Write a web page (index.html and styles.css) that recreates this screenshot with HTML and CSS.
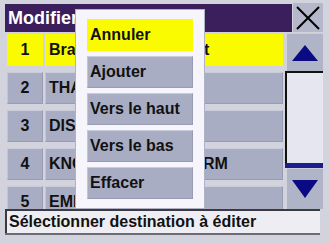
FILE: index.html
```html
<!DOCTYPE html>
<html lang="fr">
<head>
<meta charset="utf-8">
<title>Modifier</title>
<link rel="stylesheet" href="styles.css">
</head>
<body>
<div class="app">
  <div class="topbar">
    <div class="title">Modifier</div>
    <div class="close">
      <svg width="30" height="29" viewBox="0 0 30 29"><path d="M4 4 L26 26 M26 4 L4 26" stroke="#000" stroke-width="2" fill="none"/></svg>
    </div>
  </div>
  <div class="main">
    <div class="list">
      <div class="row sel"><div class="num">1</div><div class="name">Branson Airport East</div></div>
      <div class="row"><div class="num">2</div><div class="name">THAI PALACE</div></div>
      <div class="row"><div class="num">3</div><div class="name">DISNEYLAND</div></div>
      <div class="row"><div class="num">4</div><div class="name">KNOTT'S BERRY FARM</div></div>
      <div class="row"><div class="num">5</div><div class="name">EMILIO'S</div></div>
    </div>
    <div class="scroll">
      <div class="sbtn up">
        <svg width="26" height="16" viewBox="0 0 26 16"><path d="M13 0 L26 16 L0 16 Z" fill="#0a0a82"/></svg>
      </div>
      <div class="track"></div>
      <div class="thumbline"></div>
      <div class="sbtn down">
        <svg width="26" height="18" viewBox="0 0 26 18"><path d="M0 0 L26 0 L13 18 Z" fill="#0a0a82"/></svg>
      </div>
    </div>
  </div>
  <div class="status">Sélectionner destination à éditer</div>
  <div class="menu">
    <div class="item sel">Annuler</div>
    <div class="item">Ajouter</div>
    <div class="item">Vers le haut</div>
    <div class="item">Vers le bas</div>
    <div class="item">Effacer</div>
  </div>
</div>
</body>
</html>
```

FILE: styles.css
```css
html, body {
  margin: 0;
  padding: 0;
}
body {
  width: 329px;
  height: 243px;
  overflow: hidden;
  background: #d2d3dd;
  font-family: "Liberation Sans", Arial, sans-serif;
  font-weight: bold;
  color: #111;
}
.app {
  position: relative;
  padding: 3px 6px 0 5px;
  width: 318px;
}
.topbar {
  display: flex;
  height: 29px;
}
.title {
  flex: 1;
  margin-top: 1px;
  background: #3b1f5c;
  color: #fff;
  font-size: 18px;
  line-height: 28px;
  padding-left: 3px;
}
.close {
  width: 30px;
  margin-left: 1px;
  background: #b4b8ca;
  display: flex;
  align-items: center;
  justify-content: center;
}
.main {
  display: flex;
  height: 177px;
  overflow: hidden;
}
.list {
  width: 280px;
  padding: 2px 0 0 2px;
  box-sizing: border-box;
  display: flex;
  flex-direction: column;
  gap: 6px;
}
.row {
  display: flex;
  gap: 2px;
  height: 32px;
  flex: none;
}
.num, .name {
  background: #a8adc3;
  border-top: 1px solid #c9ccda;
  border-left: 1px solid #c2c5d4;
  border-bottom: 1px solid #979cb2;
  border-right: 1px solid #979cb2;
  box-sizing: border-box;
  font-size: 16px;
  line-height: 30px;
  white-space: nowrap;
  overflow: hidden;
}
.num {
  width: 36px;
  text-align: center;
}
.name {
  width: 238px;
  padding-left: 3px;
}
.row.sel .num, .row.sel .name {
  background: #fbfb00;
  border-color: #fbfb00;
}
.scroll {
  width: 38px;
  display: flex;
  flex-direction: column;
  padding-top: 1px;
}
.sbtn {
  margin-left: 2px;
  background: #b0b4c7;
  border-top: 1px solid #c8cbd8;
  box-sizing: border-box;
  display: flex;
  justify-content: center;
}
.sbtn.up {
  height: 38px;
  align-items: center;
}
.sbtn.down {
  height: 41px;
  padding-top: 11px;
}
.track {
  height: 92px;
  background: #e6e6f0;
  border-left: 2px solid #111;
  border-top: 2px solid #111;
  box-sizing: border-box;
}
.thumbline {
  height: 5px;
  background: #1c1c8c;
}
.status {
  width: 315px;
  height: 24px;
  box-sizing: border-box;
  background: #ededf3;
  border-top: 2px solid #3a3a40;
  border-left: 2px solid #3a3a40;
  box-shadow: 0 2px 0 #6c6c74;
  font-size: 16px;
  line-height: 22px;
  padding-left: 2px;
  white-space: nowrap;
}
.menu {
  position: absolute;
  left: 75px;
  top: 9px;
  width: 130px;
  height: 200px;
  box-sizing: border-box;
  background: #f5f5fb;
  border: 1px solid #aeb2c4;
  padding: 9px 11px 9px 11px;
  display: flex;
  flex-direction: column;
  gap: 5px;
}
.item {
  height: 32px;
  flex: none;
  box-sizing: border-box;
  background: #a8adc3;
  border-top: 1px solid #c9ccda;
  border-left: 1px solid #c2c5d4;
  border-bottom: 1px solid #979cb2;
  border-right: 1px solid #979cb2;
  font-size: 16px;
  line-height: 30px;
  padding-left: 2px;
  white-space: nowrap;
}
.item.sel {
  background: #fbfb00;
  border-color: #fbfb00;
}
```
